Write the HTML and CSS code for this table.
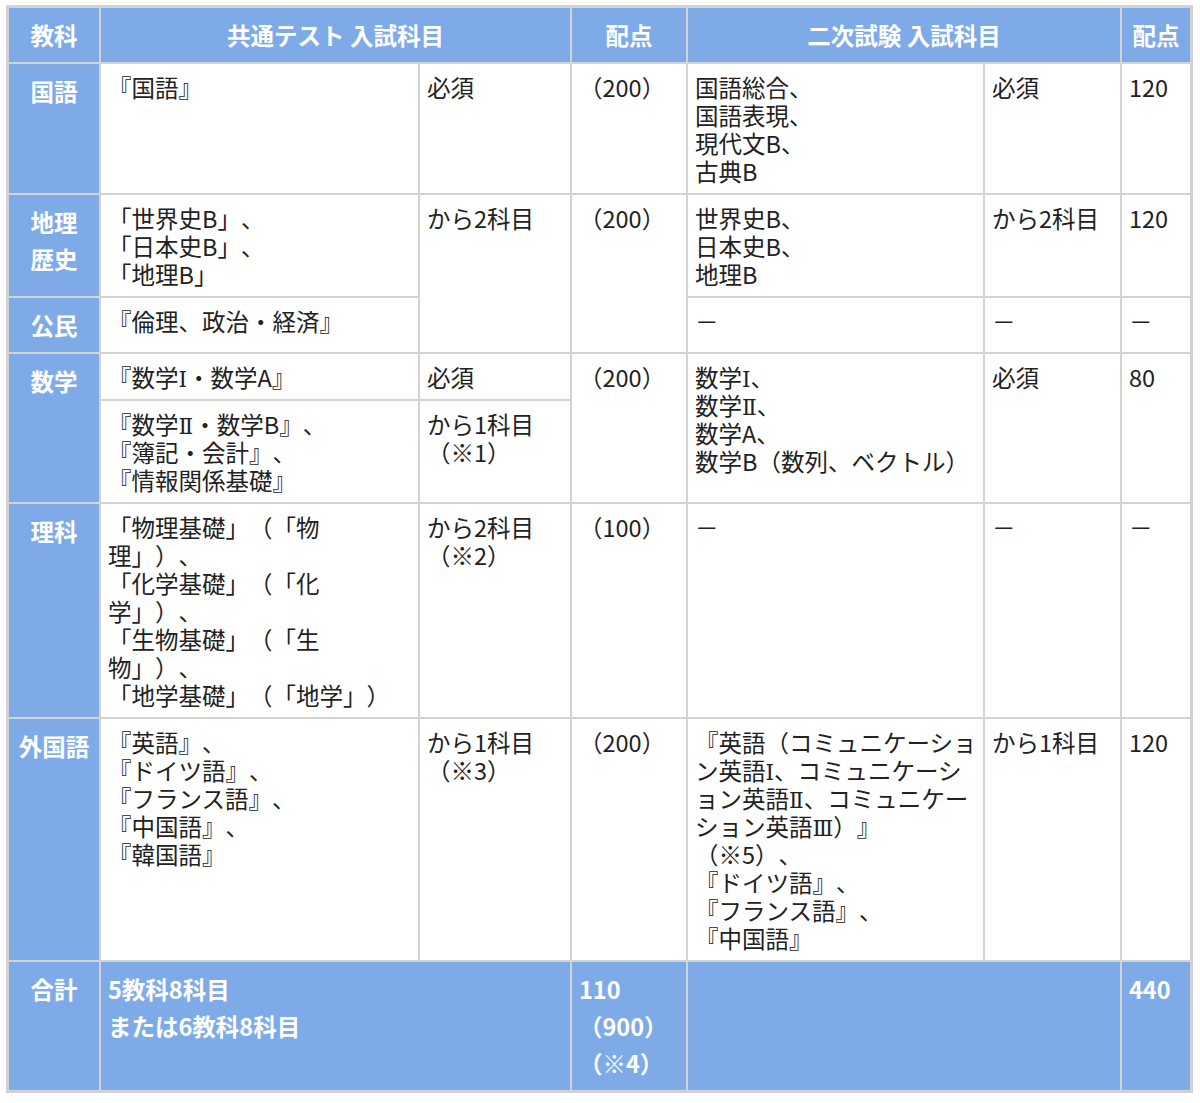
FILE: index.html
```html
<!DOCTYPE html>
<html lang="ja">
<head>
<meta charset="utf-8">
<title>入試科目</title>
<link rel="stylesheet" href="styles.css">
</head>
<body>
<table class="exam">
  <colgroup>
    <col class="w1"><col class="w2"><col class="w3"><col class="w4"><col class="w5"><col class="w6"><col class="w7">
  </colgroup>
  <thead>
    <tr class="head">
      <th class="c1">教科</th>
      <th colspan="2">共通テスト 入試科目</th>
      <th>配点</th>
      <th colspan="2">二次試験 入試科目</th>
      <th>配点</th>
    </tr>
  </thead>
  <tbody>
    <tr>
      <th class="c1 subj">国語</th>
      <td>『国語』</td>
      <td>必須</td>
      <td>（200）</td>
      <td>国語総合、<br>国語表現、<br>現代文B、<br>古典B</td>
      <td>必須</td>
      <td>120</td>
    </tr>
    <tr>
      <th class="c1 subj">地理<br>歴史</th>
      <td>「世界史B」、<br>「日本史B」、<br>「地理B」</td>
      <td rowspan="2">から2科目</td>
      <td rowspan="2">（200）</td>
      <td>世界史B、<br>日本史B、<br>地理B</td>
      <td>から2科目</td>
      <td>120</td>
    </tr>
    <tr>
      <th class="c1 subj">公民</th>
      <td>『倫理、政治・経済』</td>
      <td>－</td>
      <td>－</td>
      <td>－</td>
    </tr>
    <tr>
      <th class="c1 subj" rowspan="2">数学</th>
      <td>『数学<span class="rn">Ⅰ</span>・数学A』</td>
      <td>必須</td>
      <td rowspan="2">（200）</td>
      <td rowspan="2">数学<span class="rn">Ⅰ</span>、<br>数学<span class="rn">Ⅱ</span>、<br>数学A、<br>数学B（数列、ベクトル）</td>
      <td rowspan="2">必須</td>
      <td rowspan="2">80</td>
    </tr>
    <tr>
      <td>『数学<span class="rn">Ⅱ</span>・数学B』、<br>『簿記・会計』、<br>『情報関係基礎』</td>
      <td>から1科目<br>（※1）</td>
    </tr>
    <tr>
      <th class="c1 subj">理科</th>
      <td>「物理基礎」（「物<br>理」）、<br>「化学基礎」（「化<br>学」）、<br>「生物基礎」（「生<br>物」）、<br>「地学基礎」（「地学」）</td>
      <td>から2科目<br>（※2）</td>
      <td>（100）</td>
      <td>－</td>
      <td>－</td>
      <td>－</td>
    </tr>
    <tr>
      <th class="c1 subj">外国語</th>
      <td>『英語』、<br>『ドイツ語』、<br>『フランス語』、<br>『中国語』、<br>『韓国語』</td>
      <td>から1科目<br>（※3）</td>
      <td>（200）</td>
      <td>『英語（コミュニケーショ<br>ン英語<span class="rn">Ⅰ</span>、コミュニケーシ<br>ョン英語<span class="rn">Ⅱ</span>、コミュニケー<br>ション英語<span class="rn">Ⅲ</span>）』<br>（※5）、<br>『ドイツ語』、<br>『フランス語』、<br>『中国語』</td>
      <td>から1科目</td>
      <td>120</td>
    </tr>
    <tr class="total">
      <th class="c1 subj">合計</th>
      <td colspan="2">5教科8科目<br>または6教科8科目</td>
      <td>110<br>（900）<br>（※4）</td>
      <td colspan="2"></td>
      <td>440</td>
    </tr>
  </tbody>
</table>
</body>
</html>
```

FILE: styles.css
```css
html, body {
  margin: 0;
  padding: 0;
  background: #ffffff;
}

body {
  font-family: "Noto Sans CJK JP", "Noto Sans", sans-serif;
  color: #222222;
  text-spacing-trim: space-all;
}

.exam {
  box-sizing: border-box;
  width: 1187px;
  margin: 5px 0 0 6px;
  border: 3px solid #d2d2d2;
  border-collapse: separate;
  border-spacing: 0;
  table-layout: fixed;
  font-size: 23.5px;
}

.w1 { width: 90px; }
.w2 { width: 319px; }
.w3 { width: 152px; }
.w4 { width: 116px; }
.w5 { width: 297px; }
.w6 { width: 137px; }
.w7 { width: 70px; }

.exam th,
.exam td {
  padding: 9px 7px 8px;
  vertical-align: top;
  text-align: left;
  white-space: nowrap;
  line-height: 28px;
  font-weight: 400;
  border-top: 2px solid #d3d3d3;
  border-left: 2px solid #d3d3d3;
  background: #ffffff;
}

.exam .c1 {
  border-left: 0;
}

.head th {
  border-top: 0;
  background: #7eabe8;
  color: #ffffff;
  font-weight: 700;
  text-align: center;
  line-height: 37px;
}

.exam th.subj {
  background: #7eabe8;
  color: #ffffff;
  font-weight: 700;
  text-align: center;
  line-height: 37px;
}

.total td {
  background: #7eabe8;
  color: #ffffff;
  font-weight: 700;
  line-height: 37px;
}

.rn {
  font-family: "DejaVu Serif", "Liberation Serif", "Noto Sans CJK JP", serif;
  font-size: 0.92em;
  line-height: 0;
}
```
